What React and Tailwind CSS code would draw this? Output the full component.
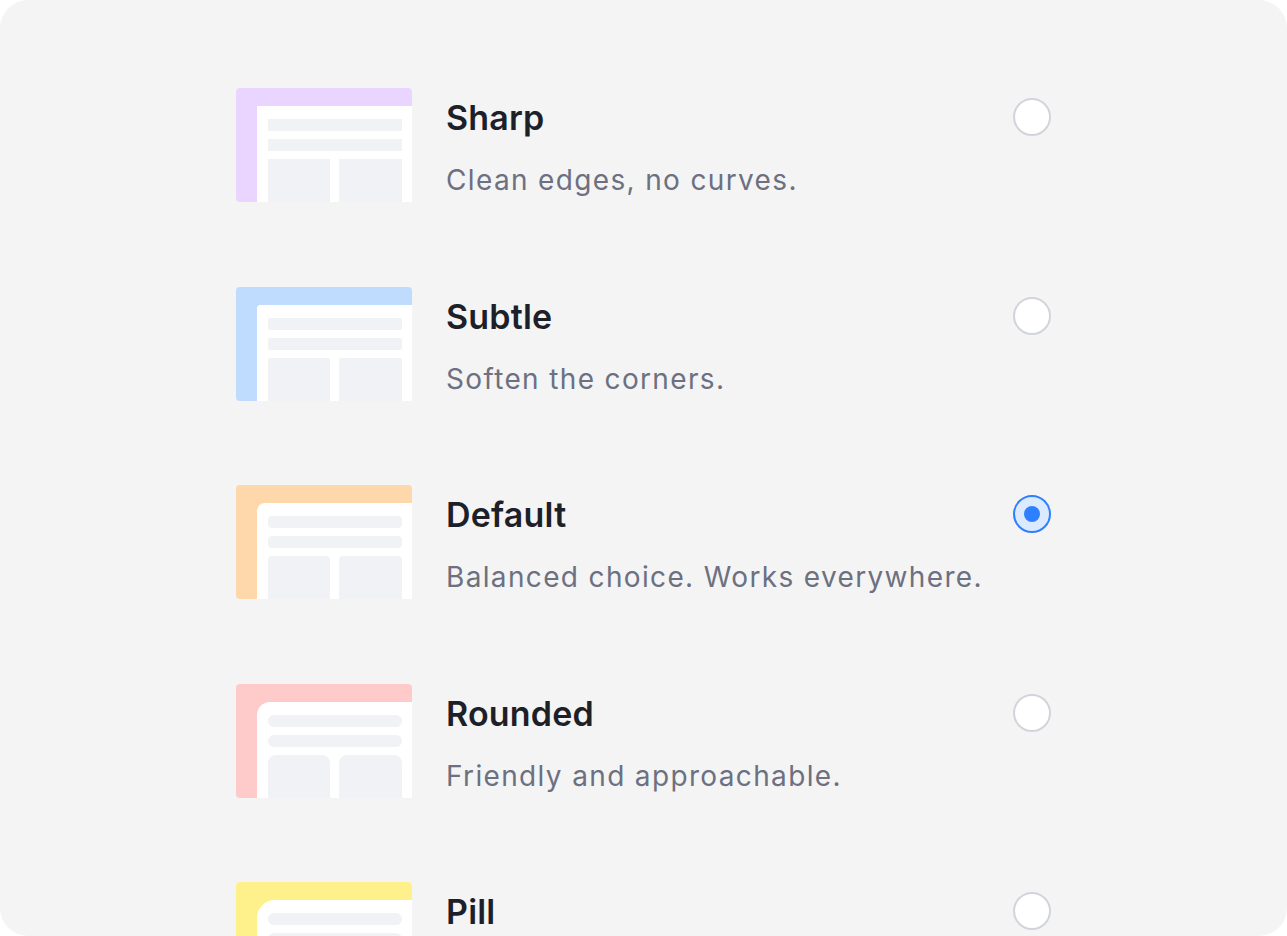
import React from "react";

const items = [
  {
    title: "Sharp",
    desc: "Clean edges, no curves.",
    bg: "bg-[#e9d5ff]",
    panel: "rounded-none",
    bar: "rounded-none",
    box: "rounded-none",
  },
  {
    title: "Subtle",
    desc: "Soften the corners.",
    bg: "bg-[#bfdbfe]",
    panel: "rounded-tl-[3px]",
    bar: "rounded-[2px]",
    box: "rounded-t-[2px]",
  },
  {
    title: "Default",
    desc: "Balanced choice. Works everywhere.",
    bg: "bg-[#fed7aa]",
    panel: "rounded-tl-[8px]",
    bar: "rounded-[4px]",
    box: "rounded-t-[4px]",
    selected: true,
  },
  {
    title: "Rounded",
    desc: "Friendly and approachable.",
    bg: "bg-[#fecaca]",
    panel: "rounded-tl-[13px]",
    bar: "rounded-full",
    box: "rounded-t-[8px]",
  },
  {
    title: "Pill",
    desc: "",
    bg: "bg-[#fef08a]",
    panel: "rounded-tl-[18px]",
    bar: "rounded-full",
    box: "rounded-t-[12px]",
  },
];

function Thumb({ item }) {
  return (
    <div className={`relative w-[176px] h-[114px] shrink-0 rounded-[4px] ${item.bg}`}>
      <div
        className={`absolute left-[21px] top-[18px] right-0 bottom-0 bg-white pl-[11px] pr-[10px] pt-[13px] flex flex-col gap-[8px] overflow-hidden ${item.panel}`}
      >
        <div className={`h-[12px] bg-[#f1f2f5] ${item.bar}`} />
        <div className={`h-[12px] bg-[#f1f2f5] ${item.bar}`} />
        <div className="flex gap-[9px] flex-1">
          <div className={`w-[62px] bg-[#f1f2f5] ${item.box}`} />
          <div className={`flex-1 bg-[#f1f2f5] ${item.box}`} />
        </div>
      </div>
    </div>
  );
}

function Radio({ selected }) {
  if (selected) {
    return (
      <div className="mt-[10px] w-[38px] h-[38px] shrink-0 rounded-full border-2 border-[#2f80ff] bg-[#dbeafe] flex items-center justify-center">
        <div className="w-[16px] h-[16px] rounded-full bg-[#2f80ff]" />
      </div>
    );
  }
  return (
    <div className="mt-[10px] w-[38px] h-[38px] shrink-0 rounded-full border-2 border-[#d1d5db] bg-white" />
  );
}

export default function App() {
  return (
    <div className="bg-white w-full h-[936px]" style={{ fontFamily: "Inter, 'Noto Sans', sans-serif" }}>
      <div className="h-[936px] bg-[#f4f4f4] rounded-[28px] overflow-hidden">
        <div className="w-[815px] mx-auto pt-[88px] flex flex-col gap-[84.5px]">
          {items.map((item) => (
            <div key={item.title} className="flex items-start gap-[34px]">
              <Thumb item={item} />
              <div className="flex-1 min-w-0">
                <div className="mt-[10px] text-[34px] leading-[40px] font-semibold text-[#1d1f29] tracking-[0.2px]">
                  {item.title}
                </div>
                {item.desc && (
                  <div className="mt-[22px] text-[28px] leading-[40px] text-[#6c7080] whitespace-nowrap tracking-[1.35px]">
                    {item.desc}
                  </div>
                )}
              </div>
              <Radio selected={item.selected} />
            </div>
          ))}
        </div>
      </div>
    </div>
  );
}
